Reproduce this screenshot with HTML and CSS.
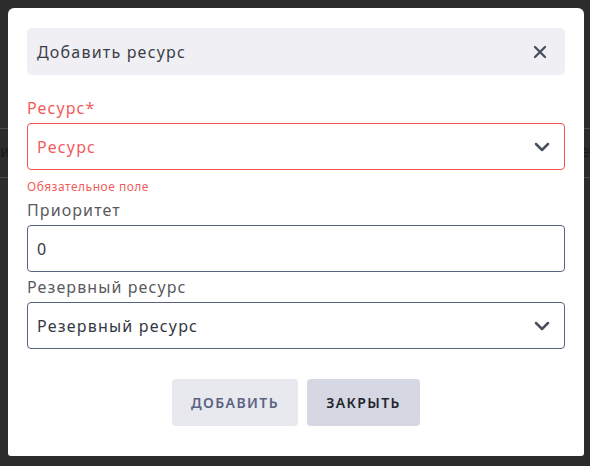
FILE: index.html
```html
<!DOCTYPE html>
<html lang="ru">
<head>
<meta charset="utf-8">
<title>Добавить ресурс</title>
<link rel="stylesheet" href="styles.css">
</head>
<body>
<div class="backdrop">
  <div class="bg-line bg-line-top"></div>
  <div class="bg-line bg-line-bottom"></div>
  <span class="bg-glyph bg-glyph-left">и</span>
  <span class="bg-glyph bg-glyph-right">е</span>
</div>
<div class="modal">
  <div class="modal-header">
    <span class="modal-title">Добавить ресурс</span>
    <button class="close-btn" aria-label="Закрыть">
      <svg width="14" height="14" viewBox="0 0 14 14"><path d="M2 2 L12 12 M12 2 L2 12" stroke="#4a4f5e" stroke-width="2.3" stroke-linecap="round" fill="none"/></svg>
    </button>
  </div>
  <div class="field">
    <label class="field-label error">Ресурс*</label>
    <div class="control control-error">
      <span class="control-value error">Ресурс</span>
      <svg class="chevron" width="16" height="10" viewBox="0 0 16 10"><path d="M2 2 L8 8 L14 2" stroke="#4a4f5e" stroke-width="2.5" stroke-linecap="round" stroke-linejoin="round" fill="none"/></svg>
    </div>
    <div class="field-error">Обязательное поле</div>
  </div>
  <div class="field">
    <label class="field-label">Приоритет</label>
    <div class="control">
      <span class="control-value">0</span>
    </div>
  </div>
  <div class="field">
    <label class="field-label">Резервный ресурс</label>
    <div class="control">
      <span class="control-value">Резервный ресурс</span>
      <svg class="chevron" width="16" height="10" viewBox="0 0 16 10"><path d="M2 2 L8 8 L14 2" stroke="#4a4f5e" stroke-width="2.5" stroke-linecap="round" stroke-linejoin="round" fill="none"/></svg>
    </div>
  </div>
  <div class="actions">
    <button class="btn btn-add">ДОБАВИТЬ</button>
    <button class="btn btn-close">ЗАКРЫТЬ</button>
  </div>
</div>
</body>
</html>
```
FILE: styles.css
```css
html, body {
  margin: 0;
  padding: 0;
}
body {
  width: 590px;
  height: 466px;
  background: #2c2c2c;
  font-family: "Noto Sans", "DejaVu Sans", sans-serif;
  position: relative;
  overflow: hidden;
}
.backdrop {
  position: absolute;
  inset: 0;
}
.bg-line {
  position: absolute;
  left: 0;
  right: 0;
  height: 1px;
  background: #4a4a4a;
}
.bg-line-top { top: 128px; }
.bg-line-bottom { top: 177px; }
.bg-glyph {
  position: absolute;
  top: 140px;
  font-size: 16px;
  color: #1a1a1a;
}
.bg-glyph-left { left: 0; }
.bg-glyph-right { right: 0; }
.modal {
  position: relative;
  margin: 8px;
  width: 576px;
  height: 448px;
  box-sizing: border-box;
  background: #ffffff;
  border-radius: 6px 6px 3px 3px;
  padding: 20px 19px 0 19px;
  display: flex;
  flex-direction: column;
}
.modal-header {
  height: 47px;
  background: #efeff4;
  border-radius: 5px;
  display: flex;
  align-items: center;
  justify-content: space-between;
  padding: 0 18px 0 10px;
  margin-bottom: 23px;
}
.modal-title {
  font-size: 16px;
  color: #3b3e48;
  letter-spacing: 1.2px;
}
.close-btn {
  border: 0;
  background: transparent;
  padding: 0;
  width: 14px;
  height: 14px;
  display: flex;
}
.field {
  display: flex;
  flex-direction: column;
  margin-bottom: 5px;
}
.field-label {
  font-size: 16px;
  line-height: 20px;
  color: #5a5a5e;
  margin-bottom: 5px;
  letter-spacing: 1.1px;
}
.field-label.error { color: #f25c5c; }
.control {
  height: 47px;
  box-sizing: border-box;
  border: 1px solid #5a6282;
  border-radius: 4px;
  display: flex;
  align-items: center;
  justify-content: space-between;
  padding: 0 14px 0 9px;
}
.control-error { border-color: #f05454; }
.control-value {
  font-size: 16px;
  color: #34373f;
  letter-spacing: 1.2px;
}
.control-value.error { color: #f25c5c; }
.field-error {
  font-size: 12px;
  line-height: 16px;
  color: #f25c5c;
  margin-top: 9px;
  letter-spacing: 0.5px;
}
.actions {
  display: flex;
  justify-content: center;
  gap: 9px;
  margin-top: 25px;
}
.btn {
  height: 47px;
  border: 0;
  border-radius: 4px;
  font-family: "Noto Sans", "DejaVu Sans", sans-serif;
  font-size: 14px;
  font-weight: 600;
  letter-spacing: 1.4px;
  padding: 0;
}
.btn-add {
  width: 126px;
  background: #e8e8ef;
  color: #5b6382;
}
.btn-close {
  width: 113px;
  background: #d5d7e2;
  color: #24252c;
}
```
